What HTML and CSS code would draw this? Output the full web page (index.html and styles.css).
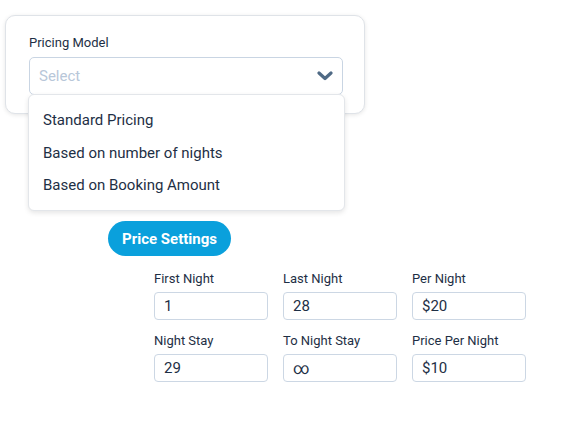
FILE: index.html
```html
<!DOCTYPE html>
<html>
<head>
<meta charset="utf-8">
<link rel="stylesheet" href="styles.css">
</head>
<body>
<div class="page">
  <div class="card">
    <div class="card-label">Pricing Model</div>
    <div class="select">
      <span class="placeholder">Select</span>
      <svg class="chev" width="16" height="10" viewBox="0 0 16 10"><path d="M2 2 L8 7.5 L14 2" fill="none" stroke="#4f6a85" stroke-width="3.2" stroke-linecap="round" stroke-linejoin="round"/></svg>
    </div>
  </div>
  <ul class="menu">
    <li>Standard Pricing</li>
    <li>Based on number of nights</li>
    <li>Based on Booking Amount</li>
  </ul>
  <button class="btn">Price Settings</button>
  <div class="grid">
    <div class="field"><div class="flabel">First Night</div><div class="input">1</div></div>
    <div class="field"><div class="flabel">Last Night</div><div class="input">28</div></div>
    <div class="field"><div class="flabel">Per Night</div><div class="input">$20</div></div>
    <div class="field"><div class="flabel">Night Stay</div><div class="input">29</div></div>
    <div class="field"><div class="flabel">To Night Stay</div><div class="input inf">∞</div></div>
    <div class="field"><div class="flabel">Price Per Night</div><div class="input">$10</div></div>
  </div>
</div>
</body>
</html>
```
FILE: styles.css
```css
* { box-sizing: border-box; }
html, body { margin: 0; padding: 0; background: #fff; }
body { font-family: Roboto, "Noto Sans", sans-serif; color: #1e2f45; width: 580px; height: 422px; overflow: hidden; }
.page { position: relative; padding: 15px 0 0 5px; display: flex; flex-direction: column; align-items: flex-start; }
.card {
  width: 360px; height: 99px;
  border: 1px solid #dfe3e8; border-radius: 10px;
  box-shadow: 0 1px 4px rgba(0,0,0,0.10);
  padding: 18px 0 0 23px;
  background: #fff;
}
.card-label { font-size: 13px; line-height: 18px; color: #1e2f45; }
.select {
  margin-top: 5px; width: 314px; height: 38px;
  border: 1px solid #c9d5e3; border-radius: 5px;
  display: flex; align-items: center; justify-content: space-between;
  padding: 0 9px 0 9px;
}
.placeholder { font-size: 15px; color: #b8c7d9; }
.chev { display: block; }
.menu {
  position: absolute; left: 28px; top: 94px; width: 317px; height: 117px;
  margin: 0; padding: 9px 0 0 14px; list-style: none;
  background: #fff; border: 1px solid #e3e6ea; border-radius: 6px;
  box-shadow: 0 2px 5px rgba(0,0,0,0.10);
}
.menu li { font-size: 15px; line-height: 32.5px; color: #1e2f45; }
.btn {
  margin: 107px 0 0 103px; height: 35px; width: 123px; border: 0; border-radius: 18px;
  background: #0aa0dc; color: #fff; font-family: Roboto, sans-serif; font-weight: 700; font-size: 15px;
  padding: 0; cursor: pointer;
}
.grid {
  margin: 14px 0 0 149px;
  display: grid; grid-template-columns: repeat(3, 114px); column-gap: 15px; row-gap: 12px;
}
.flabel { font-size: 13px; line-height: 18px; margin-bottom: 4px; }
.input {
  height: 28px; border: 1px solid #ccd7e4; border-radius: 4px;
  font-size: 15px; line-height: 27px; padding-left: 9px; color: #1e2f45;
}
.inf { font-size: 16px; }
```
